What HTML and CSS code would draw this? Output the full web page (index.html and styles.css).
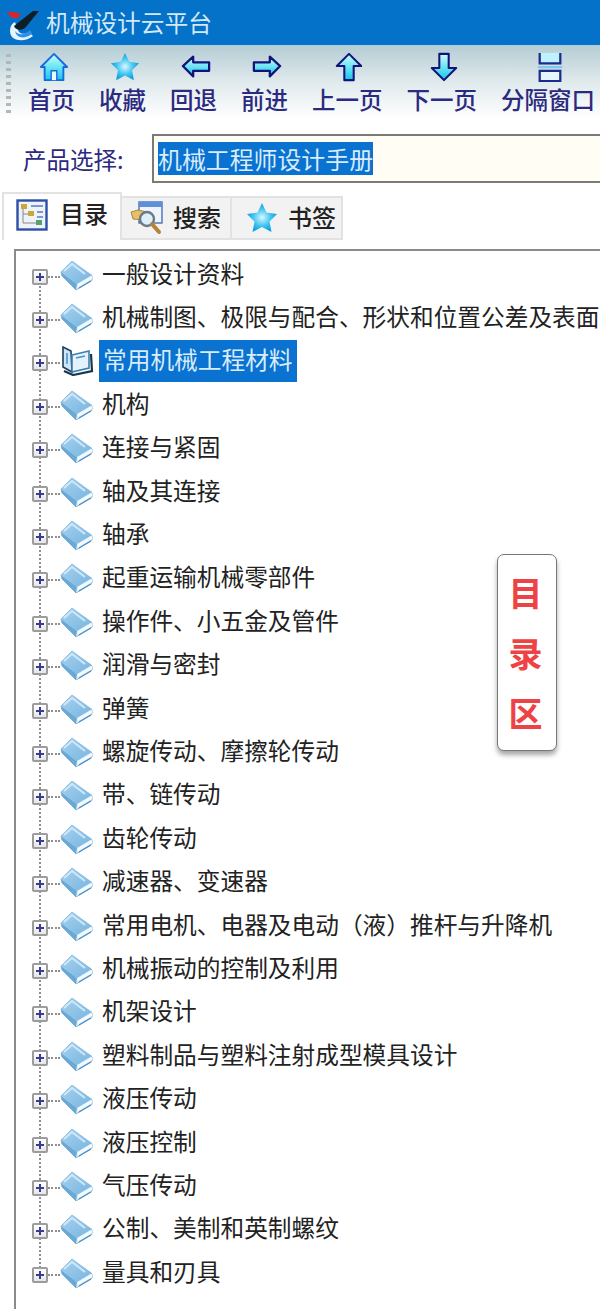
FILE: index.html
```html
<!DOCTYPE html>
<html lang="zh-CN">
<head>
    <meta charset="UTF-8">
    <meta name="viewport" content="width=device-width, initial-scale=1.0">
    <title>机械设计云平台</title>
    <link rel="stylesheet" href="styles.css">
</head>
<body>
    <svg class="defs" width="0" height="0">
        <defs>
            <linearGradient id="cyanFill" x1="0" y1="0" x2="0" y2="1">
                <stop offset="0" stop-color="#c8ffff"/>
                <stop offset="1" stop-color="#12c8e8"/>
            </linearGradient>
            <linearGradient id="coverFill" x1="0" y1="0" x2="1" y2="1">
                <stop offset="0" stop-color="#a6d2ee"/>
                <stop offset="1" stop-color="#78b4e0"/>
            </linearGradient>
            <radialGradient id="starFill">
                <stop offset="0" stop-color="#d8f8ff"/>
                <stop offset="0.6" stop-color="#3ec4f0"/>
                <stop offset="1" stop-color="#0e9fdc"/>
            </radialGradient>
            <symbol id="book" viewBox="0 0 34 30">
                <path d="M1 12 L12 1 L32 16 L32 20 L16 30 L2 16 Z" fill="#dff0fa" stroke="#86b6d8" stroke-width="1"/>
                <path d="M1 12 L12 1 L32 15 L17 24 Z" fill="url(#coverFill)"/>
                <path d="M4 11 L12 4 L25 14" stroke="#cfe8f8" stroke-width="2" fill="none"/>
                <path d="M1 12 L17 24 L16 30 L2 16 Z" fill="#6aa8d6"/>
                <path d="M19 25 L31 18 M19 28 L31 21" stroke="#4c8fc4" stroke-width="1.3" fill="none"/>
                <path d="M18 24 L32 16 L32 19 L18 27 Z" fill="#f4fbff"/>
            </symbol>
            <symbol id="bookOpen" viewBox="0 0 34 30">
                <path d="M3 1 L11 5 L12 26 L3 21 Z" fill="#cfe6f6" stroke="#1c3f5c" stroke-width="1.6"/>
                <path d="M12 9 L29 5 L29 22 L12 26 Z" fill="#e4f2fb" stroke="#3b7fb0" stroke-width="1.6"/>
                <path d="M31 8 L32 25 L13 29 L4 25" fill="none" stroke="#16384f" stroke-width="2.2"/>
                <path d="M7 7 L7 18 M16 12 L25 10" stroke="#3f93d0" stroke-width="1.5"/>
            </symbol>
        </defs>
    </svg>

    <div class="titlebar">
        <svg class="app-logo" width="36" height="38" viewBox="0 0 36 38">
            <path d="M12 18 C6 21 6 29 9 33 C14 38 24 37 30 32 L26 28 C21 31 16 30 15 26 Z" fill="#e6f4ff"/>
            <path d="M12 27 C16 32 22 31 27 26 L29 30 C22 35 14 35 12 27 Z" fill="#2f8fe8"/>
            <path d="M11 22 L30 7 L36 7 L22 24 C18 27 12 26 11 22 Z" fill="#101e28"/>
            <path d="M4 8 L11 8 L18 10 L15 14 L9 14 Z" fill="#d8262c"/>
        </svg>
        <span class="app-name">机械设计云平台</span>
    </div>

    <div class="toolbar">
        <div class="grip"></div>
        <div class="tool">
            <svg class="tool-icon" viewBox="0 0 32 32">
                <path d="M16 2 L30 16 L26 16 L26 30 L6 30 L6 16 L2 16 Z" fill="url(#cyanFill)" stroke="#1a68e0" stroke-width="2" stroke-linejoin="round"/>
                <path d="M13 30 L13 20 L19 20 L19 30" fill="#e8fbff" stroke="#1a68e0" stroke-width="1.5"/>
            </svg>
            <span>首页</span>
        </div>
        <div class="tool">
            <svg class="tool-icon" viewBox="0 0 32 32">
                <path d="M16 1 L20.5 10.5 L31 12 L23.5 19.5 L25.5 30 L16 25 L6.5 30 L8.5 19.5 L1 12 L11.5 10.5 Z" fill="url(#starFill)"/>
            </svg>
            <span>收藏</span>
        </div>
        <div class="tool">
            <svg class="tool-icon" viewBox="0 0 32 32">
                <path d="M2 15 L13 5 L13 11 L30 11 L30 20 L13 20 L13 26 Z" fill="url(#cyanFill)" stroke="#12127a" stroke-width="2.4" stroke-linejoin="round"/>
            </svg>
            <span>回退</span>
        </div>
        <div class="tool">
            <svg class="tool-icon" viewBox="0 0 32 32">
                <path d="M30 15 L19 5 L19 11 L2 11 L2 20 L19 20 L19 26 Z" fill="url(#cyanFill)" stroke="#12127a" stroke-width="2.4" stroke-linejoin="round"/>
            </svg>
            <span>前进</span>
        </div>
        <div class="tool">
            <svg class="tool-icon" viewBox="0 0 32 32">
                <path d="M16 2 L29 15 L21 15 L21 30 L11 30 L11 15 L3 15 Z" fill="url(#cyanFill)" stroke="#12127a" stroke-width="2.2" stroke-linejoin="round"/>
            </svg>
            <span>上一页</span>
        </div>
        <div class="tool">
            <svg class="tool-icon" viewBox="0 0 32 32">
                <path d="M16 30 L29 17 L21 17 L21 2 L11 2 L11 17 L3 17 Z" fill="url(#cyanFill)" stroke="#12127a" stroke-width="2.2" stroke-linejoin="round"/>
            </svg>
            <span>下一页</span>
        </div>
        <div class="tool">
            <svg class="tool-icon" viewBox="0 0 32 32">
                <path d="M5 1 L5 12 L27 12 L27 1" fill="#bdf2ff" stroke="#1b2c8c" stroke-width="2.4"/>
                <rect x="3" y="15" width="26" height="2.4" fill="#7fc8f0"/>
                <path d="M5 31 L5 20 L27 20 L27 31 Z" fill="#e4f6ff" stroke="#1b2c8c" stroke-width="2.4"/>
            </svg>
            <span>分隔窗口</span>
        </div>
    </div>

    <div class="product">
        <label class="product-label">产品选择:</label>
        <div class="product-box"><span class="product-value">机械工程师设计手册</span></div>
    </div>

    <div class="tabs">
        <div class="tab tab-active">
            <svg width="32" height="32" viewBox="0 0 32 32">
                <rect x="1.5" y="1.5" width="29" height="29" fill="#eef3fa" stroke="#2d4fa8" stroke-width="2.4"/>
                <path d="M7 8 L7 24 L22 24 M7 15 L13 15" stroke="#888" fill="none"/>
                <rect x="5" y="5" width="6" height="5" fill="#c9a838"/>
                <rect x="12" y="12" width="6" height="5" fill="#c9a838"/>
                <path d="M15 7 L27 7 M21 13 L27 13 M21 18 L27 18" stroke="#5a7ac0" stroke-width="1.6"/>
                <rect x="20" y="21" width="6" height="5" fill="#58a070"/>
            </svg>
            <span>目录</span>
        </div>
        <div class="tab">
            <svg width="34" height="34" viewBox="0 0 34 34">
                <rect x="9" y="1" width="23" height="21" fill="#eef4fb" stroke="#4a70b8" stroke-width="1.4"/>
                <rect x="9" y="1" width="23" height="5" fill="#5f8fd8"/>
                <path d="M1 11 L8 9 L17 11 L15 19 L3 18 Z" fill="#e5c068" stroke="#a68a3c"/>
                <circle cx="17" cy="18" r="7" fill="#dff0fa" stroke="#6d7a84" stroke-width="2.4"/>
                <path d="M22 23 L29 31" stroke="#b8823a" stroke-width="4" stroke-linecap="round"/>
            </svg>
            <span>搜索</span>
        </div>
        <div class="tab tab-bookmark">
            <svg width="32" height="32" viewBox="0 0 32 32">
                <path d="M16 1 L20.5 10.5 L31 12 L23.5 19.5 L25.5 30 L16 25 L6.5 30 L8.5 19.5 L1 12 L11.5 10.5 Z" fill="url(#starFill)"/>
            </svg>
            <span>书签</span>
        </div>
    </div>

    <div class="tree">
        <div class="row"><i class="toggle"></i><svg class="book"><use href="#book"/></svg><span class="name">一般设计资料</span></div>
        <div class="row"><i class="toggle"></i><svg class="book"><use href="#book"/></svg><span class="name">机械制图、极限与配合、形状和位置公差及表面</span></div>
        <div class="row"><i class="toggle"></i><svg class="book"><use href="#bookOpen"/></svg><span class="name name-selected">常用机械工程材料</span></div>
        <div class="row"><i class="toggle"></i><svg class="book"><use href="#book"/></svg><span class="name">机构</span></div>
        <div class="row"><i class="toggle"></i><svg class="book"><use href="#book"/></svg><span class="name">连接与紧固</span></div>
        <div class="row"><i class="toggle"></i><svg class="book"><use href="#book"/></svg><span class="name">轴及其连接</span></div>
        <div class="row"><i class="toggle"></i><svg class="book"><use href="#book"/></svg><span class="name">轴承</span></div>
        <div class="row"><i class="toggle"></i><svg class="book"><use href="#book"/></svg><span class="name">起重运输机械零部件</span></div>
        <div class="row"><i class="toggle"></i><svg class="book"><use href="#book"/></svg><span class="name">操作件、小五金及管件</span></div>
        <div class="row"><i class="toggle"></i><svg class="book"><use href="#book"/></svg><span class="name">润滑与密封</span></div>
        <div class="row"><i class="toggle"></i><svg class="book"><use href="#book"/></svg><span class="name">弹簧</span></div>
        <div class="row"><i class="toggle"></i><svg class="book"><use href="#book"/></svg><span class="name">螺旋传动、摩擦轮传动</span></div>
        <div class="row"><i class="toggle"></i><svg class="book"><use href="#book"/></svg><span class="name">带、链传动</span></div>
        <div class="row"><i class="toggle"></i><svg class="book"><use href="#book"/></svg><span class="name">齿轮传动</span></div>
        <div class="row"><i class="toggle"></i><svg class="book"><use href="#book"/></svg><span class="name">减速器、变速器</span></div>
        <div class="row"><i class="toggle"></i><svg class="book"><use href="#book"/></svg><span class="name">常用电机、电器及电动（液）推杆与升降机</span></div>
        <div class="row"><i class="toggle"></i><svg class="book"><use href="#book"/></svg><span class="name">机械振动的控制及利用</span></div>
        <div class="row"><i class="toggle"></i><svg class="book"><use href="#book"/></svg><span class="name">机架设计</span></div>
        <div class="row"><i class="toggle"></i><svg class="book"><use href="#book"/></svg><span class="name">塑料制品与塑料注射成型模具设计</span></div>
        <div class="row"><i class="toggle"></i><svg class="book"><use href="#book"/></svg><span class="name">液压传动</span></div>
        <div class="row"><i class="toggle"></i><svg class="book"><use href="#book"/></svg><span class="name">液压控制</span></div>
        <div class="row"><i class="toggle"></i><svg class="book"><use href="#book"/></svg><span class="name">气压传动</span></div>
        <div class="row"><i class="toggle"></i><svg class="book"><use href="#book"/></svg><span class="name">公制、美制和英制螺纹</span></div>
        <div class="row row-last"><i class="toggle"></i><svg class="book"><use href="#book"/></svg><span class="name">量具和刃具</span></div>

        <div class="callout"><span>目</span><span>录</span><span>区</span></div>
    </div>
</body>
</html>
```

FILE: styles.css
```css
html, body {
    height: 100%;
}
body {
    margin: 0;
    padding: 0;
    width: 600px;
    height: 1309px;
    overflow: hidden;
    display: flex;
    flex-direction: column;
    background-color: #ffffff;
    font-family: "Noto Sans CJK SC", "Liberation Sans", sans-serif;
    color: #222222;
}
.defs {
    position: absolute;
}

/* title bar */
.titlebar {
    height: 45px;
    flex: none;
    display: flex;
    align-items: center;
    background-color: #0472c8;
}
.app-logo {
    margin-left: 3px;
    flex: none;
}
.app-name {
    margin-left: 7px;
    font-size: 23.7px;
    line-height: 45px;
    color: #d4e9f8;
}

/* toolbar */
.toolbar {
    height: 80px;
    flex: none;
    box-sizing: border-box;
    padding: 7px 0 0 28px;
    display: flex;
    gap: 24px;
    position: relative;
    background: linear-gradient(#b4ccd4, #dfe9ec 45%, #ffffff 92%);
}
.grip {
    position: absolute;
    left: 6px;
    top: 9px;
    width: 5px;
    height: 60px;
    background: repeating-linear-gradient(#b2b8ba 0 3px, transparent 3px 7px);
}
.tool {
    display: flex;
    flex-direction: column;
    align-items: center;
    flex: none;
}
.tool-icon {
    width: 30px;
    height: 30px;
    flex: none;
    margin-left: 4px;
}
.tool span {
    font-size: 23.5px;
    font-weight: 500;
    line-height: 34px;
    color: #2c2a80;
    white-space: nowrap;
}

/* product select */
.product {
    height: 67px;
    flex: none;
    display: flex;
    align-items: center;
    padding-left: 23px;
    overflow: hidden;
}
.product-label {
    width: 129px;
    flex: none;
    font-size: 23.5px;
    color: #2c2a80;
    white-space: nowrap;
}
.product-box {
    flex: 1;
    height: 49px;
    margin-right: -4px;
    box-sizing: border-box;
    border: 2px solid #7a7a7a;
    padding: 4px;
    background-color: #fffdf4;
    display: flex;
    align-items: center;
}
.product-value {
    background-color: #0a72d0;
    color: #d8ecfa;
    font-size: 23.9px;
    line-height: 33px;
    white-space: nowrap;
}

/* tabs */
.tabs {
    height: 57px;
    flex: none;
    box-sizing: border-box;
    padding: 0 0 9px 2px;
    display: flex;
    align-items: flex-end;
}
.tab {
    box-sizing: border-box;
    height: 44px;
    padding-left: 8px;
    display: flex;
    align-items: center;
    gap: 9px;
    width: 110px;
    background-color: #f2f2f2;
    border: 2px solid #e2e2e2;
    border-left-width: 0;
    font-size: 24px;
    font-weight: 500;
    color: #222222;
}
.tab span {
    margin-bottom: 4px;
}
.tab-active {
    width: 120px;
    height: 48px;
    padding-left: 12px;
    padding-bottom: 5px;
    gap: 12px;
    background-color: #ffffff;
    border-left-width: 2px;
    border-bottom-width: 0;
}
.tab-bookmark {
    width: 111px;
    padding-left: 14px;
    gap: 10px;
}

/* tree */
.tree {
    flex: 1;
    position: relative;
    margin-left: 14px;
    margin-right: -4px;
    box-sizing: border-box;
    padding-top: 4px;
    border-left: 2px solid #8a8a8a;
    border-top: 2px solid #8a8a8a;
}
.row {
    height: 43.4px;
    display: flex;
    align-items: center;
    position: relative;
    padding-left: 16px;
    white-space: nowrap;
}
/* dotted connectors: down to the next row, across to the book */
.row::before {
    content: "";
    position: absolute;
    left: 23px;
    top: 50%;
    height: 100%;
    border-left: 2px dotted #8f8f8f;
}
.row::after {
    content: "";
    position: absolute;
    left: 32px;
    top: calc(50% - 1px);
    width: 12px;
    border-top: 2px dotted #8f8f8f;
}
.row-last::before {
    display: none;
}
.toggle {
    width: 16px;
    height: 16px;
    flex: none;
    box-sizing: border-box;
    border: 2px solid #9c9c9c;
    border-radius: 2px;
    background: linear-gradient(#ffffff, #e6e6e6);
    position: relative;
    z-index: 1;
}
.toggle::before {
    content: "";
    position: absolute;
    left: 2px;
    top: 5px;
    width: 8px;
    height: 2px;
    background-color: #3a3a90;
}
.toggle::after {
    content: "";
    position: absolute;
    left: 5px;
    top: 2px;
    width: 2px;
    height: 8px;
    background-color: #3a3a90;
}
.book {
    width: 34px;
    height: 30px;
    flex: none;
    margin-left: 12px;
    margin-bottom: 4px;
    position: relative;
    z-index: 1;
}
.name {
    margin-left: 8px;
    margin-bottom: 4px;
    height: 42px;
    font-size: 23.7px;
    line-height: 38px;
    color: #222222;
}
.name-selected {
    margin-left: 5px;
    padding: 0 4px;
    background-color: #0a72d0;
    color: #d8ecfa;
}

/* red note over the tree */
.callout {
    position: absolute;
    left: 481px;
    top: 303px;
    width: 60px;
    height: 197px;
    box-sizing: border-box;
    border: 1px solid #777777;
    border-radius: 7px;
    background-color: #ffffff;
    box-shadow: 0 4px 5px rgba(0, 0, 0, 0.35);
    display: flex;
    flex-direction: column;
    align-items: center;
    justify-content: space-between;
    padding: 14px 3px 14px 0;
    font-size: 34px;
    line-height: 46px;
    font-weight: 700;
    color: #ee4245;
}
```
